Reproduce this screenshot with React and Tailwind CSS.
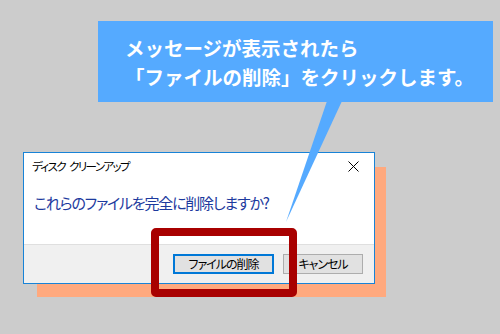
const jp = "font-['Noto_Sans_CJK_JP',sans-serif]";

const DialogButton = ({ children, primary, width }) => (
    <button
        className={`${width} h-[20px] flex items-center justify-center bg-[#e1e1e1] text-[12px] leading-none text-black [font-feature-settings:'palt'] tracking-[-1px] ${primary
            ? 'border-2 border-[#0078d7]'
            : 'border border-[#adadad]'
            }`}
    >
        {children}
    </button>
);

const App = () => {
    return (
        <div className={`relative w-[500px] h-[334px] overflow-hidden bg-[#cccccc] pt-[152px] pl-[23px] ${jp}`}>
            {/* Dialog with orange backdrop */}
            <div className="relative w-[352px] h-[132px]">
                <div className="absolute left-[14px] top-[15px] w-[349px] h-[130px] bg-[#ffa97e]" />
                <div className="relative z-10 flex flex-col w-full h-full bg-white border border-[#1883d7]">
                    {/* Title bar */}
                    <div className="flex items-center justify-between h-[27px] pl-[8px] pr-[10px]">
                        <span className="flex gap-[4px] text-[11.5px] text-black [font-feature-settings:'palt'] tracking-[-1.6px]">
                            <span>ディスク</span>
                            <span>クリーンアップ</span>
                        </span>
                        <svg width="11" height="11" viewBox="0 0 11 11" className="mr-[5px]">
                            <path d="M0.5 0.5 L10.5 10.5 M10.5 0.5 L0.5 10.5" stroke="#000" strokeWidth="1" />
                        </svg>
                    </div>

                    {/* Message */}
                    <div className="flex-1 pl-[10px] pt-[13px]">
                        <p className="text-[15px] leading-[20px] text-[#1d3a9e] [font-feature-settings:'palt'] tracking-[-1.2px]">
                            これらのファイルを完全に削除しますか?
                        </p>
                    </div>

                    {/* Footer */}
                    <div className="h-[39px] bg-[#f0f0f0] border-t border-[#dfdfdf] flex justify-end items-start gap-[9px] pt-[9px] pr-[11px]">
                        <DialogButton primary width="w-[101px]">ファイルの削除</DialogButton>
                        <DialogButton width="w-[80px]">キャンセル</DialogButton>
                    </div>
                </div>
            </div>

            {/* Callout */}
            <div className="absolute left-[98px] top-[21px] w-[395px] h-[81px] z-30 bg-[#55aaff] pl-[27px] pt-[12px]">
                <p className="text-[19.5px] leading-[29px] font-bold text-white">
                    メッセージが表示されたら
                </p>
                <p className="text-[19.5px] leading-[29px] font-bold text-white">
                    「ファイルの削除」をクリックします。
                </p>
            </div>

            {/* Callout tail */}
            <svg className="absolute left-0 top-0 z-20" width="500" height="334" viewBox="0 0 500 334">
                <polygon points="327,101 342,101 286,222" fill="#55aaff" />
            </svg>

            {/* Highlight frame */}
            <div className="absolute left-[151px] top-[228px] w-[146px] h-[69px] z-40 border-[8px] border-[#a80000] rounded-[5px]" />
        </div>
    );
};

export default App;
